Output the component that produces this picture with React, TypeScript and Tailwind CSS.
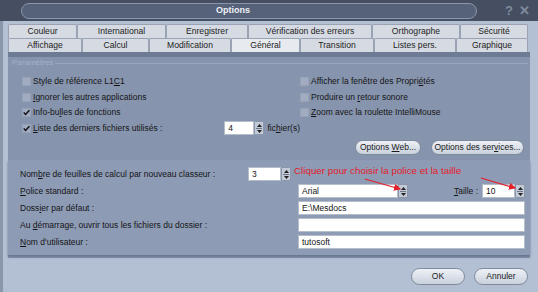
import React from 'react';

const font = { fontFamily: '"Liberation Sans", Arial, sans-serif' };

const U = ({ children }: { children: React.ReactNode }) => <span className="underline underline-offset-1">{children}</span>;

const Check = ({ on }: { on?: boolean }) => (
  <div className="w-[9px] h-[9px] bg-[#a1acc1] border border-[#97a2b7] flex items-center justify-center shrink-0">
    {on && (
      <svg width="7" height="7" viewBox="0 0 7 7">
        <path d="M0.7 3.4 L2.6 5.4 L6.4 1.2" stroke="#111" strokeWidth="1.5" fill="none" />
      </svg>
    )}
  </div>
);

const Spin = () => (
  <div className="w-[10px] h-[14px] bg-[#c2cad7] border border-[#8c97aa] flex flex-col items-center justify-center gap-[1px] shrink-0">
    <svg width="5" height="3" viewBox="0 0 5 3"><path d="M0 3 L2.5 0 L5 3 Z" fill="#222" /></svg>
    <div className="w-[6px] h-px bg-[#6d7788]" />
    <svg width="5" height="3" viewBox="0 0 5 3"><path d="M0 0 L2.5 3 L5 0 Z" fill="#222" /></svg>
  </div>
);

const Tab = ({ w, label, active }: { w: number; label: string; active?: boolean }) => (
  <div
    style={{ width: w }}
    className={`h-full flex items-center justify-center border border-[#9aa3b3] border-b-0 rounded-t-[2px] text-[8.6px] text-[#222] ${active ? 'bg-[#e7eaef]' : 'bg-[#d6dbe3]'}`}
  >
    {label}
  </div>
);

const CheckRow = ({ on, children }: { on?: boolean; children: React.ReactNode }) => (
  <div className="flex items-center gap-[2px] h-[15.5px]">
    <Check on={on} />
    <span>{children}</span>
  </div>
);

const Field = ({ children, className = '' }: { children?: React.ReactNode; className?: string }) => (
  <div className={`h-[14px] bg-white border border-[#b5bdcb] flex items-center pl-[3px] ${className}`}>{children}</div>
);

const PillBtn = ({ children, w, h = 15 }: { children: React.ReactNode; w: number; h?: number }) => (
  <div
    style={{ width: w, height: h }}
    className="rounded-full bg-gradient-to-b from-[#eef1f6] to-[#c9d1dd] border border-[#7f8a9d] flex items-center justify-center text-[#1a1a1a]"
  >
    <span>{children}</span>
  </div>
);

export default function App() {
  return (
    <div style={font} className="w-[538px] h-[292px] bg-[#b3bfd3] flex flex-col text-[8.5px] text-[#151515] overflow-hidden">
      {/* title bar */}
      <div className="h-[21px] bg-[#464f62] flex items-center shrink-0">
        <div className="ml-[21px] w-[456px] h-[16px] rounded-full border border-[#8a96ab] bg-[#56627a] flex items-center justify-center text-[#eef1f6] font-bold text-[9px]">
          <span className="-ml-[32px]">Options</span>
        </div>
        <div className="ml-auto mr-[8px] flex items-center gap-[6px] text-[#7f8a9e] font-bold text-[13px]">
          <span>?</span>
          <span>✕</span>
        </div>
      </div>

      <div className="flex flex-1 border-l-[3px] border-[#8a96ab]">
        <div className="flex flex-col">
          {/* tabs */}
          <div className="pt-[3px] pl-[5px] flex flex-col">
            <div className="flex h-[14px]">
              <Tab w={69} label="Couleur" />
              <Tab w={89} label="International" />
              <Tab w={82} label="Enregistrer" />
              <Tab w={124} label="Vérification des erreurs" />
              <Tab w={88} label="Orthographe" />
              <Tab w={68} label="Sécurité" />
            </div>
            <div className="flex h-[14px]">
              <Tab w={74} label="Affichage" />
              <Tab w={67} label="Calcul" />
              <Tab w={82} label="Modification" />
              <Tab w={69} label="Général" active />
              <Tab w={74} label="Transition" />
              <Tab w={82} label="Listes pers." />
              <Tab w={72} label="Graphique" />
            </div>
          </div>

          {/* panel */}
          <div className="ml-[5px] w-[522px] h-[206px] bg-[#8694ae] border-t-[5px] border-[#6d7b94] flex flex-col relative">
            <div className="flex items-center gap-[2px] pl-[4px] pt-[1px] h-[11px]">
              <span className="text-[#a7b2c6] text-[8px]">Paramètres</span>
              <div className="flex-1 h-px bg-[#9ba6ba] mr-[2px]" />
            </div>

            <div className="flex pl-[14px] pt-[6px]">
              <div className="w-[278px] flex flex-col">
                <CheckRow>Style de référence L1<U>C</U>1</CheckRow>
                <CheckRow><U>I</U>gnorer les autres applications</CheckRow>
                <CheckRow on>Info-bu<U>l</U>les de fonctions</CheckRow>
                <div className="flex items-center h-[15.5px]">
                  <div className="flex items-center gap-[2px] w-[226px]">
                    <Check on />
                    <span><U>L</U>iste des derniers fichiers utilisés :</span>
                  </div>
                  <Field className="w-[33px]">4</Field>
                  <Spin />
                  <span className="ml-[3px]">fic<U>h</U>ier(s)</span>
                </div>
              </div>
              <div className="flex flex-col">
                <CheckRow>Afficher la fenêtre des Propri<U>é</U>tés</CheckRow>
                <CheckRow>Produire un <U>r</U>etour sonore</CheckRow>
                <CheckRow><U>Z</U>oom avec la roulette IntelliMouse</CheckRow>
              </div>
            </div>

            <div className="flex justify-end gap-[10px] pr-[6px] mt-[4px]">
              <PillBtn w={66}>Options <U>W</U>eb...</PillBtn>
              <PillBtn w={93}>Options des ser<U>v</U>ices...</PillBtn>
            </div>

            {/* lower group */}
            <div className="mt-[5px] flex-1 bg-[#8d9bb5] shadow-[0_2px_2px_#67758e] pl-[12px] pr-[5px] pt-[7px] flex flex-col gap-[3px] mb-[3px]">
              <div className="flex items-center h-[14px]">
                <span className="w-[228px]">Nom<U>b</U>re de feuilles de calcul par nouveau classeur :</span>
                <Field className="w-[33px]">3</Field>
                <Spin />
                <span className="ml-[3px] text-[#e3202a] text-[9.8px] -mt-[6px]">Cliquer pour choisir la police et la taille</span>
              </div>
              <div className="flex items-center h-[14px]">
                <span className="w-[278px]"><U>P</U>olice standard :</span>
                <Field className="w-[100px]">Arial</Field>
                <Spin />
                <span className="ml-auto mr-[4px]"><U>T</U>aille :</span>
                <Field className="w-[33px]">10</Field>
                <Spin />
              </div>
              <div className="flex items-center h-[14px]">
                <span className="w-[278px]">Doss<U>i</U>er par défaut :</span>
                <Field className="flex-1">E:\Mesdocs</Field>
              </div>
              <div className="flex items-center h-[14px]">
                <span className="w-[278px]">Au <U>d</U>émarrage, ouvrir tous les fichiers du dossier :</span>
                <Field className="flex-1" />
              </div>
              <div className="flex items-center h-[14px]">
                <span className="w-[278px]"><U>N</U>om d'utilisateur :</span>
                <Field className="flex-1">tutosoft</Field>
              </div>
            </div>

            {/* red annotation arrows */}
            <svg className="absolute left-0 top-0 pointer-events-none" width="522" height="206" viewBox="0 0 522 206">
              <defs>
                <marker id="ah" markerWidth="6" markerHeight="6" refX="5" refY="3" orient="auto">
                  <path d="M0 0 L6 3 L0 6 Z" fill="#e3202a" />
                </marker>
              </defs>
              <line x1="357" y1="122" x2="392" y2="132" stroke="#e3202a" strokeWidth="1.2" markerEnd="url(#ah)" />
              <line x1="473" y1="121" x2="507" y2="131" stroke="#e3202a" strokeWidth="1.2" markerEnd="url(#ah)" />
            </svg>
          </div>

          {/* buttons */}
          <div className="flex justify-end gap-[9px] pr-[2px] pt-[10px]">
            <PillBtn w={54} h={17}>OK</PillBtn>
            <PillBtn w={54} h={17}>Annuler</PillBtn>
          </div>
        </div>
      </div>
    </div>
  );
}
